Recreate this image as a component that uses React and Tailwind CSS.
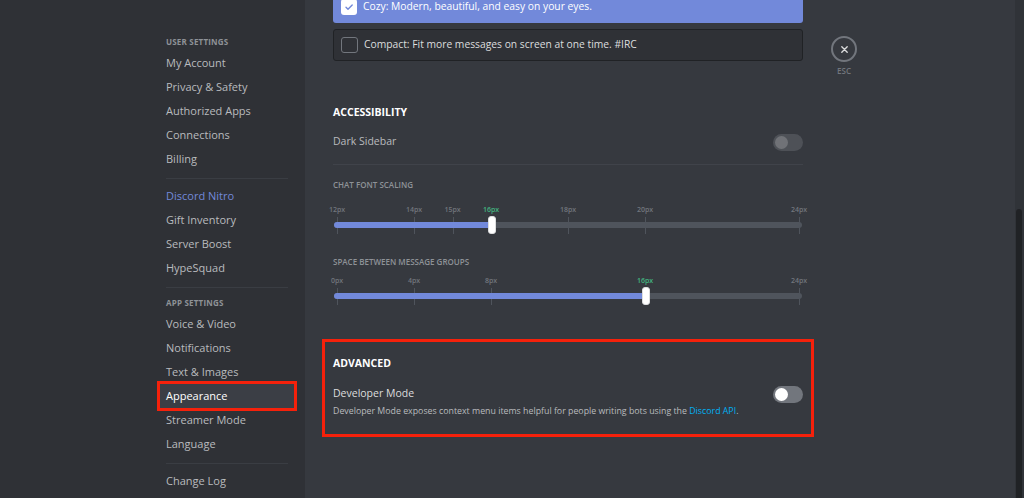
const font = { fontFamily: '"Open Sans", "Noto Sans", Arial, sans-serif' };

const userItems = ['My Account', 'Privacy & Safety', 'Authorized Apps', 'Connections', 'Billing'];
const nitroItems = ['Discord Nitro', 'Gift Inventory', 'Server Boost', 'HypeSquad'];
const appItems = ['Voice & Video', 'Notifications', 'Text & Images', 'Appearance', 'Streamer Mode', 'Language'];

function NavItem({ label }) {
  const active = label === 'Appearance';
  const nitro = label === 'Discord Nitro';
  return (
    <div
      className={`h-[24px] px-[6px] flex items-center text-[11px] font-medium ${
        active ? 'bg-[#3b3e45] text-white ring-[3px] ring-[#f5210b]' : nitro ? 'text-[#7289da] rounded-[3px]' : 'text-[#b9bbbe] rounded-[3px]'
      }`}
    >
      {label}
    </div>
  );
}

function Header({ children }) {
  return (
    <div className="h-[16px] px-[6px] flex items-center text-[8px] font-bold uppercase tracking-[0.2px] text-[#8e9297] mb-[1px]">
      {children}
    </div>
  );
}

function Divider() {
  return <div className="h-px bg-[#3a3d43] mx-[6px] mt-[7px] mb-[5px]" />;
}

function Toggle({ dim }) {
  return (
    <div className={`w-[30px] h-[17px] rounded-full bg-[#72767d] flex items-center px-[2px] ${dim ? 'opacity-40' : ''}`}>
      <div className={`w-[13px] h-[13px] rounded-full ${dim ? 'bg-[#c7c9cb]' : 'bg-white'}`} />
    </div>
  );
}

function Slider({ marks, min, max, value }) {
  const pos = (v) => 4 + ((v - min) / (max - min)) * 462;
  return (
    <div className="relative h-[31px]">
      {marks.map((m) => (
        <div key={m}>
          <div
            className={`absolute top-[1px] -translate-x-1/2 text-[7px] leading-[10px] font-semibold ${
              m === value ? 'text-[#43b581]' : 'text-[#72767d]'
            }`}
            style={{ left: pos(m) }}
          >
            {m}px
          </div>
          <div className="absolute top-[13px] h-[17px] w-px bg-[#4f545c]" style={{ left: pos(m) }} />
        </div>
      ))}
      <div className="absolute top-[18px] left-[1px] right-[1px] h-[6px] rounded-full bg-[#4f545c]" />
      <div className="absolute top-[18px] left-[1px] h-[6px] rounded-full bg-[#7289da]" style={{ width: pos(value) }} />
      <div
        className="absolute top-[12px] w-[8px] h-[18px] -translate-x-1/2 rounded-[3px] bg-white border border-[#dcddde]"
        style={{ left: pos(value) + 0.5 }}
      />
    </div>
  );
}

export default function App() {
  return (
    <div className="flex w-[1024px] h-[498px] overflow-hidden bg-[#36393f]" style={font}>
      {/* sidebar */}
      <div className="w-[305px] flex-none bg-[#2f3136] flex justify-end">
        <nav className="w-[145px] pr-[11px] pt-[34px]">
          <Header>User Settings</Header>
          {userItems.map((i) => <NavItem key={i} label={i} />)}
          <Divider />
          {nitroItems.map((i) => <NavItem key={i} label={i} />)}
          <div className="h-px bg-[#3a3d43] mx-[6px] mt-[7px] mb-[7px]" />
          <Header>App Settings</Header>
          {appItems.map((i) => <NavItem key={i} label={i} />)}
          <Divider />
          <NavItem label="Change Log" />
        </nav>
      </div>

      {/* content */}
      <div className="flex-1 flex pl-[28px]">
        <div className="w-[470px] flex-none flex flex-col">
          <div className="-mt-[9px] h-[32px] rounded-[3px] bg-[#7289da] flex items-center px-[8px] gap-[6px]">
            <div className="w-[16px] h-[16px] rounded-[3px] bg-white flex items-center justify-center">
              <svg width="10" height="10" viewBox="0 0 10 10" fill="none">
                <path d="M2 5.2l2 2L8.2 3" stroke="#7289da" strokeWidth="1.4" strokeLinecap="round" strokeLinejoin="round" />
              </svg>
            </div>
            <span className="text-[10.3px] text-white font-medium">Cozy: Modern, beautiful, and easy on your eyes.</span>
          </div>
          <div className="mt-[6px] h-[32px] rounded-[3px] bg-[#2f3136] border border-[#202225] flex items-center px-[7px] gap-[6px]">
            <div className="w-[17px] h-[16px] rounded-[3px] border border-[#72767d]" />
            <span className="text-[10.3px] text-[#dcddde] font-medium">Compact: Fit more messages on screen at one time. #IRC</span>
          </div>

          <div className="mt-[44px] h-[16px] flex items-center text-[10.5px] font-bold text-white uppercase">Accessibility</div>
          <div className="mt-[11px] h-[20px] flex items-center justify-between">
            <span className="text-[10.5px] text-[#b9bbbe] font-medium">Dark Sidebar</span>
            <Toggle dim />
          </div>
          <div className="mt-[12px] h-px bg-[#40434a]" />
          <div className="mt-[14px] h-[12px] flex items-center text-[8px] font-semibold uppercase text-[#8e9297]">Chat Font Scaling</div>
          <div className="mt-[13px]">
            <Slider marks={[12, 14, 15, 16, 18, 20, 24]} min={12} max={24} value={16} />
          </div>
          <div className="mt-[21px] h-[12px] flex items-center text-[8px] font-semibold uppercase text-[#8e9297]">Space Between Message Groups</div>
          <div className="mt-[7px]">
            <Slider marks={[0, 4, 8, 16, 24]} min={0} max={24} value={16} />
          </div>

          <div className="mt-[33px] -mx-[11px] border-[3px] border-[#f5210b] px-[8px] pt-[14px] pb-[16px]">
            <div className="h-[16px] flex items-center text-[10.5px] font-bold text-white uppercase">Advanced</div>
            <div className="mt-[12px] h-[20px] flex items-center justify-between">
              <span className="text-[10.5px] text-[#dcddde] font-medium">Developer Mode</span>
              <Toggle />
            </div>
            <div className="mt-[2px] h-[12px] flex items-center text-[8.8px] text-[#b9bbbe]">
              <span>
                Developer Mode exposes context menu items helpful for people writing bots using the{' '}
                <span className="text-[#00b0f4]">Discord API</span>.
              </span>
            </div>
          </div>
        </div>

        {/* esc */}
        <div className="ml-[28px] pt-[36px] flex flex-col items-center w-[26px]">
          <div className="w-[26px] h-[26px] rounded-full border-2 border-[#72767d] flex items-center justify-center">
            <svg width="9" height="9" viewBox="0 0 10 10">
              <path d="M2 2l6 6M8 2l-6 6" stroke="#dcddde" strokeWidth="1.5" strokeLinecap="round" />
            </svg>
          </div>
          <div className="mt-[3px] text-[8px] font-semibold text-[#72767d]">ESC</div>
        </div>

        <div className="flex-1" />

        {/* scrollbar */}
        <div className="w-[9px] flex-none bg-[#303338] flex flex-col pt-[209px]">
          <div className="ml-[1px] w-[6px] flex-1 rounded-t-[3px] bg-[#202225]" />
        </div>
      </div>
    </div>
  );
}
